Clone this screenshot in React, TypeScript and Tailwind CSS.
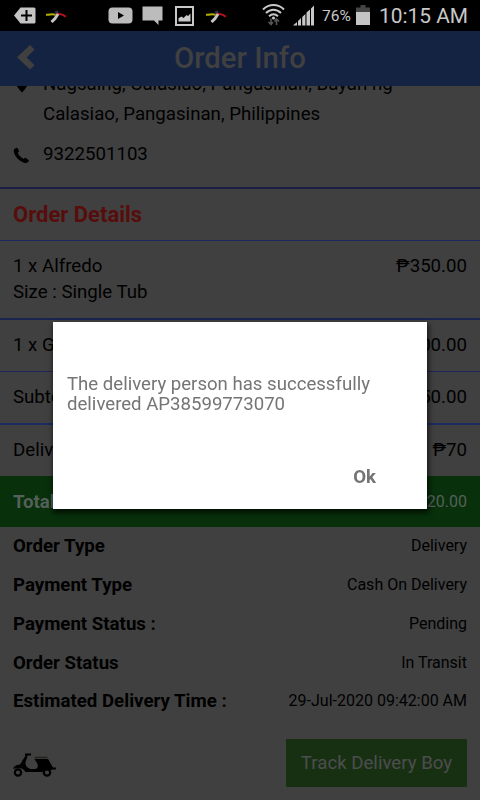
import React from 'react';

const ITEMS = [
  { name: '1 x Alfredo', option: 'Size : Single Tub', price: '₱350.00', row: 'h-[79px] border-b-2 border-[#1c2550]' },
  { name: '1 x Graham', price: '₱300.00', row: 'h-[52px] border-b border-[#1c2760]' },
  { name: 'Subtotal', price: '₱650.00', row: 'h-[53px] border-b-2 border-[#1c2b62]' },
  { name: 'Delivery Charge', price: '₱70', row: 'h-[51px]' },
];

const DETAILS = [
  { label: 'Order Type', value: 'Delivery' },
  { label: 'Payment Type', value: 'Cash On Delivery' },
  { label: 'Payment Status :', value: 'Pending' },
  { label: 'Order Status', value: 'In Transit' },
  { label: 'Estimated Delivery Time :', value: '29-Jul-2020 09:42:00 AM' },
];

const BirdIcon = () => (
  <svg width="21" height="13" viewBox="0 0 21 13" fill="none">
    <path d="M8.500 1.500 12 .5l1 3.500-2.500 1z" fill="#27304f" />
    <path d="M0 4.700c4 .3 6-1.400 9.500 0" stroke="#b5b000" strokeWidth="2" />
    <path d="M11 4.300c3-.7 6 .2 8.800 2.400" stroke="#c0141c" strokeWidth="2" />
    <path d="M12 4 9 8.500 5.500 12" stroke="#c4c4c4" strokeWidth="3" />
  </svg>
);

const StatusBar = () => (
  <div className="h-[31px] shrink-0 bg-black flex items-start text-[#c8c8c8]">
    <div className="flex items-start pl-[14px]">
      <svg className="mt-[7px]" width="22" height="17" viewBox="0 0 22 17">
        <path d="M0 8.500 6.500.5H20a1.500 1.500 0 0 1 1.500 1.500v13a1.500 1.500 0 0 1-1.500 1.500H6.500z" fill="#c4c4c4" />
        <path d="M12.500 3v11M7 8.500h11" stroke="#000" strokeWidth="2" />
      </svg>
      <div className="ml-[10px] mt-[10px]"><BirdIcon /></div>
      <svg className="ml-[41px] mt-[7px]" width="25" height="17" viewBox="0 0 25 17">
        <rect x=".5" y=".5" width="24" height="16" rx="4" fill="#bcbcbc" />
        <path d="m10 5 6 3.500L10 12z" fill="#000" />
      </svg>
      <svg className="ml-[9px] mt-[6px]" width="22" height="19" viewBox="0 0 22 19">
        <path d="M.5.5h20v14h-4V19l-4.500-4.500H.5z" fill="#bcbcbc" />
      </svg>
      <svg className="ml-[11px] mt-[6px]" width="19" height="20" viewBox="0 0 19 20">
        <path d="M1 1h17v18H1z" fill="none" stroke="#c8c8c8" strokeWidth="2" />
        <path d="M3.500 15.500v-3.200l3-1.800 2 1.500 3-3 1.500 1L15.500 7.500v8z" fill="#c8c8c8" />
      </svg>
      <div className="ml-[12px] mt-[10px]"><BirdIcon /></div>
    </div>
    <div className="ml-auto flex items-start pr-[10px]">
      <svg className="mt-[3px]" width="23" height="24" viewBox="0 0 23 24" fill="none">
        <path d="M1 6.500c6-6 15-6 21 0M4 10c4.500-4.500 10.500-4.500 15 0M7 13.300c3-2.700 6-2.700 9 0" stroke="#c8c8c8" strokeWidth="2" />
        <circle cx="11.500" cy="15" r="1.500" fill="#c8c8c8" />
        <path d="M9 15.500v6M6.500 19 9 21.500l2-2.500M14.500 22v-6M12.500 18.500l2-2.500 2.500 2.500" stroke="#555" strokeWidth="1.600" />
      </svg>
      <svg className="ml-[8px] mt-[5px]" width="22" height="21" viewBox="0 0 22 21" fill="#c8c8c8">
        <path d="M0 20.500 4 17v3.500zM5 16l3-3v7.500H5zM9.200 12l3.200-3v11.500H9.200zM13.500 7.500 17 4.500v16h-3.500zM18 3.500l3-3v20h-3z" />
      </svg>
      <span className="ml-[7px] mt-[6px] w-[30px] text-[15.500px] leading-[21px]">76%</span>
      <svg className="ml-[4px] mt-[5px]" width="14" height="20" viewBox="0 0 14 20">
        <path d="M4.500 0h5v2.500H14V7H0V2.500h4.500z" fill="#454545" />
        <path d="M0 7h14v13H0z" fill="#c4c4c4" />
      </svg>
      <span className="ml-[9px] mt-[4px] w-[91px] whitespace-nowrap text-[20.900px] leading-[24px]">10:15 AM</span>
    </div>
  </div>
);

const Dialog = () => (
  <div className="fixed inset-0 z-10 pt-[322px] pl-[53px]">
    <div className="w-[374px] h-[187px] bg-white text-[#757575] flex flex-col shadow-[1px_3px_5px_1px_rgba(0,0,0,0.65)]">
      <p className="pt-[52px] pl-[14px] text-[18.600px] leading-[20px]">
        The delivery person has successfully
        <br />
        delivered AP38599773070
      </p>
      <button className="mt-auto mb-[21px] mr-[51px] self-end text-[18.670px] leading-[22px] font-bold">Ok</button>
    </div>
  </div>
);

export default function App() {
  return (
    <div className="w-[480px] h-[800px] overflow-hidden flex flex-col bg-[#404040] text-black font-['Roboto',sans-serif]">
      <StatusBar />

      <header className="h-[55px] shrink-0 bg-[#152342] text-[#404040] flex items-center">
        <svg className="ml-[17px] mb-[2px]" width="18" height="25" viewBox="0 0 18 25">
          <path d="M13 0 17.500 4.500 9.700 12.500l7.800 7.700L13 24.500 0 12.300z" fill="#404040" />
        </svg>
        <h1 className="ml-[139px] mb-[2px] whitespace-nowrap text-[29.330px] leading-[34px] font-medium">Order Info</h1>
      </header>

      <section className="h-[103px] shrink-0 overflow-hidden flex flex-col justify-end border-b-2 border-[#1a1d48] text-[18.670px]">
        <div className="flex pl-[13px] leading-[30px]">
          <svg className="mt-[8px] mr-[12px] shrink-0" width="18" height="16" viewBox="0 0 18 16">
            <path d="M9 0a6 6 0 0 1 6 6c0 3.500-6 9.500-6 9.500S3 9.500 3 6a6 6 0 0 1 6-6z" />
          </svg>
          <p className="whitespace-nowrap">
            Nagsaing, Calasiao, Pangasinan, Bayan ng
            <br />
            Calasiao, Pangasinan, Philippines
          </p>
        </div>
        <div className="mt-[10px] mb-[18px] flex items-center pl-[13px] leading-[30px]">
          <svg className="mr-[13px] mt-px" width="17" height="16" viewBox="0 0 17 16">
            <path d="M1.200 2.200 3 .9c.6-.4 1.200-.3 1.600.3l1.300 2.600c.3.600.1 1.100-.5 1.500l-.7.500c.8 2.500 3.300 5 6 6.100l.7-.7c.4-.5 1-.6 1.500-.2l2.600 1.900c.6.500.6 1 .1 1.500l-1.300 1.200c-1 .7-2.500.4-4-.2C5.800 13.500 2.300 10 1 5.500c-.4-1.300-.5-2.500.2-3.300z" />
          </svg>
          <span>9322501103</span>
        </div>
      </section>

      <h2 className="h-[52px] shrink-0 flex items-center pl-[13px] border-b border-[#1c2760] text-[22px] font-bold text-[#580d0d]">
        Order Details
      </h2>

      {ITEMS.map(item => (
        <div key={item.name} className={`${item.row} shrink-0 flex justify-between px-[13px] pt-[12px] text-[18.670px] leading-[26px]`}>
          <div>
            <p>{item.name}</p>
            {item.option && <p>{item.option}</p>}
          </div>
          <span>{item.price}</span>
        </div>
      ))}

      <div className="h-[51px] shrink-0 flex items-center justify-between px-[13px] bg-[#07300b] text-[#56605a]">
        <span className="text-[18.670px] font-bold">Total</span>
        <span className="text-[16px]">₱720.00</span>
      </div>

      {DETAILS.map(detail => (
        <div key={detail.label} className="h-[38.75px] shrink-0 flex items-center justify-between px-[13px]">
          <span className="text-[18.670px] leading-[26px] font-bold">{detail.label}</span>
          <span className="text-[16px]">{detail.value}</span>
        </div>
      ))}

      <footer className="flex items-start justify-between px-[13px] pt-[18px]">
        <svg className="mt-[14px]" width="44" height="25" viewBox="0 0 44 25">
          <path d="M12 1.500h6M14.500 1.500 9.500 9" fill="none" stroke="#000" strokeWidth="1.800" />
          <path d="M.5 14.500c1.500-2 4-3 6.500-3l5.500-7.500 2 .8c-3.500 5-2.500 9.700 3 11.200h5c3.500-.8 2.500-5 .5-7.500l-1.500-2.500h13.500L40 14.500h3v2h-3.500L37 17.500c-2-2-6.500-1.500-7.500 1.500h-17c-2-3.500-6-5-12-3z" />
          <path d="M21.500 4.500h13" stroke="#20201c" strokeWidth="1.400" />
          <circle cx="5" cy="19.500" r="3.200" fill="none" stroke="#000" strokeWidth="2.200" />
          <circle cx="34" cy="19.500" r="3.200" fill="#404040" stroke="#000" strokeWidth="2.200" />
        </svg>
        <button className="w-[181px] h-[48px] rounded-[1px] bg-[#183012] text-[#4d4d50] text-[18.670px]">
          Track Delivery Boy
        </button>
      </footer>

      <Dialog />
    </div>
  );
}
